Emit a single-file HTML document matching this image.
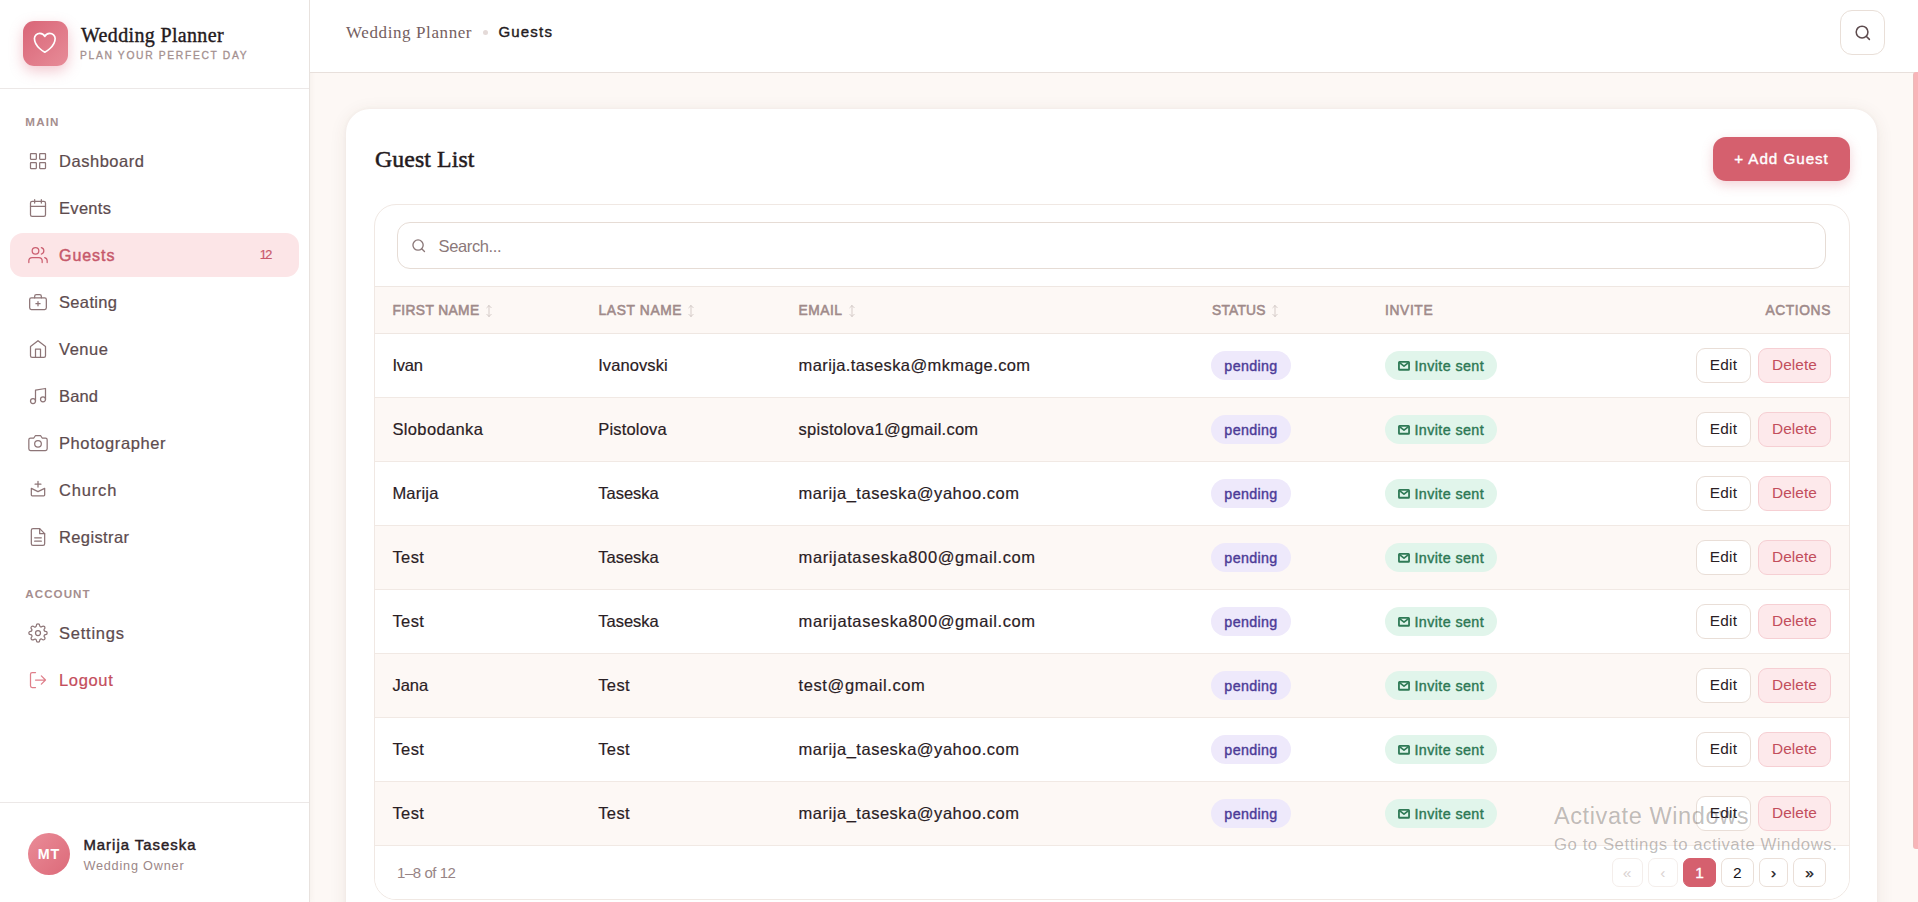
<!DOCTYPE html>
<html lang="en">
<head>
<meta charset="utf-8">
<title>Wedding Planner - Guests</title>
<style>
*{box-sizing:border-box;margin:0;padding:0}
html,body{width:1918px;height:902px;overflow:hidden}
body{font-family:"Liberation Sans",sans-serif;background:#fdf8f5;color:#2a2024;position:relative}
span{white-space:nowrap}
/* sidebar */
#sidebar{position:absolute;left:0;top:0;width:310px;height:902px;background:#fff;border-right:1px solid #e8e2de;box-shadow:1px 0 6px rgba(100,70,55,.05)}
#brand{position:absolute;left:0;top:0;width:309px;height:89px;border-bottom:1px solid #ece8e7}
#logo{position:absolute;left:23px;top:21px;width:45px;height:45px;border-radius:11px;background:linear-gradient(135deg,#d96577 0%,#e78c98 100%);box-shadow:0 5px 14px rgba(222,110,128,.38)}
#logo svg{position:absolute;left:8.100px;top:7.800px}
#brand .t1{position:absolute;left:81px;top:23px;color:#241a1d;-webkit-text-stroke:.38px #241a1d;line-height:24px}
#brand .t2{position:absolute;left:80px;top:49px;color:#a4908f;line-height:14px;-webkit-text-stroke:.3px}
.sec{position:absolute;left:25.300px;font:bold 11.6px/14px "Liberation Sans",sans-serif;color:#a58e8e;white-space:nowrap}
.nav{position:absolute;left:10px;width:289px;height:44px;border-radius:13px}
.nav svg{position:absolute;left:18px;top:12px;width:20px;height:20px;stroke:#8d7577;fill:none;stroke-width:1.5;stroke-linecap:round;stroke-linejoin:round}
.nav span.l{position:absolute;left:49px;top:11px;font:16.5px/22px "Liberation Sans",sans-serif;color:#5d4b4e;-webkit-text-stroke:.22px}
.nav.active{background:#fce5e7}
.nav.active span.l{color:#c6586b;-webkit-text-stroke:.45px;font-size:16px;top:11.700px}
.nav.active svg{stroke:#cb5f70}
.nav.logout span.l{color:#c44d5c}
.nav.logout svg{stroke:#df7f8a}
.nav .badge{position:absolute;left:249.800px;top:14.700px;letter-spacing:-1.700px;-webkit-text-stroke:.2px;font:12.7px/14px "Liberation Sans",sans-serif;color:#c9586b}
#user{position:absolute;left:0;top:802px;width:309px;height:100px;border-top:1px solid #ece8e7}
#avatar{position:absolute;left:28px;top:30px;width:42px;height:42px;border-radius:50%;background:linear-gradient(135deg,#ea8c98,#dc6a79);color:#fff;line-height:41px;text-align:center}
#user .n{position:absolute;left:83.400px;top:32.400px;line-height:20px;color:#2a2024}
#user .r{position:absolute;left:83.400px;top:54.200px;line-height:18px;color:#9c8788}
/* top bar */
#topbar{position:absolute;left:310px;top:0;width:1608px;height:73px;background:#fff;border-bottom:1px solid #e8e0dc}
#topbar .b1{position:absolute;left:36px;top:21px;line-height:24px;color:#75605f}
#topbar .dot{position:absolute;left:173px;top:30px;width:5px;height:5px;border-radius:50%;background:#e4dad8}
#topbar .b2{position:absolute;left:188.400px;top:20.300px;line-height:24px;color:#241b22}
#sbtn{position:absolute;left:1530px;top:10px;width:45px;height:45px;border:1px solid #e9dfd8;border-radius:12px;background:#fff}
#sbtn svg{position:absolute;left:12.700px;top:12.500px}
/* card */
#card{position:absolute;left:346px;top:109px;width:1531px;height:900px;background:#fff;border-radius:24px;box-shadow:0 3px 18px rgba(80,55,40,.085),0 0 4px rgba(80,55,40,.045)}
#card h1{position:absolute;left:29px;top:35px;font-weight:normal;line-height:30px;color:#241a1d;-webkit-text-stroke:.5px #241a1d;white-space:nowrap}
#addbtn{position:absolute;left:1367px;top:28px;width:137px;height:44px;border-radius:13px;background:#d5606e;color:#fff;line-height:44px;text-align:center;box-shadow:0 4px 12px rgba(213,96,110,.28);white-space:nowrap}
#tbl{position:absolute;left:28px;top:95px;width:1476px;height:696px;border:1px solid #f0e8e3;border-radius:22px;overflow:hidden;background:#fff}
#search{position:absolute;left:22px;top:17px;width:1429px;height:47px;border:1px solid #e6dcd5;border-radius:13px;background:#fff}
#search svg{position:absolute;left:12.600px;top:15px}
#search span{position:absolute;left:40.600px;top:12px;line-height:22px;color:#8b7879}
#thead{position:absolute;left:0;top:81px;width:1474px;height:48px;background:#fdf8f5;border-top:1px solid #efe7e2;border-bottom:1px solid #efe7e2}
.th{position:absolute;top:16.200px;font:13.8px/16px "Liberation Sans",sans-serif;color:#a08a8a;-webkit-text-stroke:.55px}
.sort{position:absolute;top:17.200px;fill:none;stroke:#cfc4c2;stroke-width:.85;stroke-linecap:round;stroke-linejoin:round}
.tr{position:absolute;left:0;width:1474px;height:64px;border-bottom:1px solid #f1e9e4;background:#fff}
.tr.alt{background:#fdf8f5}
.td{position:absolute;top:20px;font:16.5px/22px "Liberation Sans",sans-serif;color:#2a2024;-webkit-text-stroke:.18px}
.pill{position:absolute;top:17px;height:29px;border-radius:15px;font:14.3px/30px "Liberation Sans",sans-serif;text-align:center;-webkit-text-stroke:.4px}
.pend{left:836px;width:80px;background:#eee9fb;color:#4c3b97}
.inv{left:1010px;width:112px;background:#e1f5eb;color:#2d7854;text-align:left}
.inv svg{position:absolute;left:12.800px;top:9.600px}
.inv span{position:absolute;left:29.500px;top:0}
.btn{position:absolute;top:14px;height:35px;border-radius:9px;font:15.4px/31px "Liberation Sans",sans-serif;text-align:center;border:1px solid #e9ded7;background:#fff;color:#2a2024}
.edit{left:1321px;width:55px}
.del{left:1383px;width:73px;background:#fde9eb;border-color:#f6cfd3;color:#c24e5c}
#tfoot{position:absolute;left:0;top:641px;width:1474px;height:53px;background:#fff}
#tfoot .cnt{position:absolute;left:22px;top:17px;line-height:20px;color:#978485}
.pg{position:absolute;top:12px;height:29px;border:1px solid #eadfd8;border-radius:7px;background:#fff;font:15.5px/27px "Liberation Sans",sans-serif;text-align:center;color:#17151a}
.pg.dis{border-color:#f4eeeb;color:#d9d2d1}
.pg.cur{background:#d5606e;border-color:#d5606e;color:#fff;-webkit-text-stroke:.35px #fff}
.pg.nx{-webkit-text-stroke:.3px #17151a}
/* overlays */
#scroll{position:absolute;left:1913px;top:72px;width:6px;height:777px;border-radius:3px 0 0 3px;background:linear-gradient(to right,#ebbab9 0,#ebbab9 1.300px,#f8b4b8 1.300px)}
#wm1,#wm2{position:absolute;left:1554px;color:rgba(40,36,34,.30);white-space:nowrap}
#wm1{top:800.800px;line-height:30px}
#wm2{top:834px;line-height:22px}
</style>
</head>
<body>
<div id="sidebar">
  <div id="brand">
    <div id="logo"><svg width="27.600" height="27.600" viewBox="0 0 24 24" fill="none" stroke="#fff" stroke-width="1.45" stroke-linejoin="round"><path d="M21 8.250c0-2.485-2.099-4.500-4.688-4.500-1.935 0-3.597 1.126-4.312 2.733-.715-1.607-2.377-2.733-4.313-2.733C5.100 3.750 3 5.765 3 8.250c0 7.220 9 12 9 12s9-4.780 9-12z"/></svg></div>
    <span class="t1" style="font-size:20px;font-family:'Liberation Serif',serif;letter-spacing:0.34px">Wedding Planner</span>
    <span class="t2" style="font-size:10.3px;font-family:'Liberation Sans',sans-serif;letter-spacing:1.66px">PLAN YOUR PERFECT DAY</span>
  </div>
  <div class="sec" style="top:115px;letter-spacing:1.19px">MAIN</div>
  <div class="nav" style="top:139px"><svg viewBox="0 0 24 24"><rect x="3" y="3" width="7" height="7" rx=".6"/><rect x="14" y="3" width="7" height="7" rx=".6"/><rect x="14" y="14" width="7" height="7" rx=".6"/><rect x="3" y="14" width="7" height="7" rx=".6"/></svg><span class="l" style="letter-spacing:0.53px">Dashboard</span></div>
  <div class="nav" style="top:186px"><svg viewBox="0 0 24 24"><rect x="3" y="4" width="18" height="18" rx="2"/><path d="M16 2v4M8 2v4M3 10h18"/></svg><span class="l" style="letter-spacing:0.31px">Events</span></div>
  <div class="nav active" style="top:233px"><svg viewBox="0 0 24 24"><path d="M17 21v-2a4 4 0 0 0-4-4H5a4 4 0 0 0-4 4v2"/><circle cx="9" cy="7" r="4"/><path d="M23 21v-2a4 4 0 0 0-3-3.870M16 3.130a4 4 0 0 1 0 7.750"/></svg><span class="l" style="letter-spacing:0.96px">Guests</span><span class="badge">12</span></div>
  <div class="nav" style="top:280px"><svg viewBox="0 0 24 24"><rect x="2" y="7" width="20" height="14" rx="2"/><path d="M8 7V5a2 2 0 0 1 2-2h4a2 2 0 0 1 2 2v2M12 11.500v5M9.500 14h5"/></svg><span class="l" style="letter-spacing:0.34px">Seating</span></div>
  <div class="nav" style="top:327px"><svg viewBox="0 0 24 24"><path d="M3 9l9-7 9 7v11a2 2 0 0 1-2 2H5a2 2 0 0 1-2-2z"/><path d="M9 22V12h6v10"/></svg><span class="l" style="letter-spacing:0.55px">Venue</span></div>
  <div class="nav" style="top:374px"><svg viewBox="0 0 24 24"><path d="M9 18V5l12-2v13"/><circle cx="6" cy="18" r="3"/><circle cx="18" cy="16" r="3"/></svg><span class="l" style="letter-spacing:0.15px">Band</span></div>
  <div class="nav" style="top:421px"><svg viewBox="0 0 24 24"><path d="M23 19a2 2 0 0 1-2 2H3a2 2 0 0 1-2-2V8a2 2 0 0 1 2-2h4l2-3h6l2 3h4a2 2 0 0 1 2 2z"/><circle cx="12" cy="13" r="4"/></svg><span class="l" style="letter-spacing:0.59px">Photographer</span></div>
  <div class="nav" style="top:468px"><svg viewBox="0 0 24 24"><path d="M4 10l8 4 8-4v8a1 1 0 0 1-1 1H5a1 1 0 0 1-1-1z"/><path d="M12 1.500v7M8.500 5h7"/></svg><span class="l" style="letter-spacing:0.84px">Church</span></div>
  <div class="nav" style="top:515px"><svg viewBox="0 0 24 24"><path d="M14 2H6a2 2 0 0 0-2 2v16a2 2 0 0 0 2 2h12a2 2 0 0 0 2-2V8z"/><path d="M14 2v6h6M16 13H8M16 17H8"/></svg><span class="l" style="letter-spacing:0.38px">Registrar</span></div>
  <div class="sec" style="top:587px;letter-spacing:1.06px">ACCOUNT</div>
  <div class="nav" style="top:611px"><svg viewBox="0 0 24 24"><circle cx="12" cy="12" r="3"/><path d="M19.400 15a1.650 1.650 0 0 0 .330 1.820l.060.060a2 2 0 0 1 0 2.830 2 2 0 0 1-2.830 0l-.060-.060a1.650 1.650 0 0 0-1.820-.330 1.650 1.650 0 0 0-1 1.510V21a2 2 0 0 1-2 2 2 2 0 0 1-2-2v-.090A1.650 1.650 0 0 0 9 19.400a1.650 1.650 0 0 0-1.820.330l-.060.060a2 2 0 0 1-2.830 0 2 2 0 0 1 0-2.830l.060-.060a1.650 1.650 0 0 0 .330-1.820 1.650 1.650 0 0 0-1.510-1H3a2 2 0 0 1-2-2 2 2 0 0 1 2-2h.090A1.650 1.650 0 0 0 4.600 9a1.650 1.650 0 0 0-.330-1.820l-.060-.060a2 2 0 0 1 0-2.830 2 2 0 0 1 2.830 0l.060.060a1.650 1.650 0 0 0 1.820.330H9a1.650 1.650 0 0 0 1-1.510V3a2 2 0 0 1 2-2 2 2 0 0 1 2 2v.090a1.650 1.650 0 0 0 1 1.510 1.650 1.650 0 0 0 1.820-.330l.060-.060a2 2 0 0 1 2.830 0 2 2 0 0 1 0 2.830l-.060.060a1.650 1.650 0 0 0-.330 1.820V9a1.650 1.650 0 0 0 1.510 1H21a2 2 0 0 1 2 2 2 2 0 0 1-2 2h-.090a1.650 1.650 0 0 0-1.510 1z"/></svg><span class="l" style="letter-spacing:0.77px">Settings</span></div>
  <div class="nav logout" style="top:658px"><svg viewBox="0 0 24 24"><path d="M9 21H5a2 2 0 0 1-2-2V5a2 2 0 0 1 2-2h4"/><path d="M16 17l5-5-5-5M21 12H9"/></svg><span class="l" style="letter-spacing:0.65px">Logout</span></div>
  <div id="user">
    <div id="avatar"><span style="font-weight:bold;font-size:14.3px;font-family:'Liberation Sans',sans-serif;letter-spacing:0.84px">MT</span></div>
    <span class="n" style="-webkit-text-stroke:.45px;font-size:14.9px;font-family:'Liberation Sans',sans-serif;letter-spacing:1.01px">Marija Taseska</span>
    <span class="r" style="font-size:12.7px;font-family:'Liberation Sans',sans-serif;letter-spacing:0.79px">Wedding Owner</span>
  </div>
</div>
<div id="topbar">
  <span class="b1" style="font-size:17px;font-family:'Liberation Serif',serif;letter-spacing:0.6px">Wedding Planner</span><div class="dot"></div><span class="b2" style="-webkit-text-stroke:.4px;font-size:15px;font-family:'Liberation Sans',sans-serif;letter-spacing:1.21px">Guests</span>
  <div id="sbtn"><svg width="17.600" height="17.600" viewBox="0 0 24 24" fill="none" stroke="#5d4b4e" stroke-width="2.100" stroke-linecap="round"><circle cx="11" cy="11" r="8"/><path d="M16.650 16.650L21 21"/></svg></div>
</div>
<div id="card">
  <h1 style="font-size:23.8px;font-family:'Liberation Serif',serif;letter-spacing:0.1px">Guest List</h1>
  <div id="addbtn"><span style="-webkit-text-stroke:.4px;font-size:15.2px;font-family:'Liberation Sans',sans-serif;letter-spacing:0.96px">+ Add Guest</span></div>
  <div id="tbl">
    <div id="search"><svg width="15.400" height="15.400" viewBox="0 0 24 24" fill="none" stroke="#8b7879" stroke-width="2.100" stroke-linecap="round"><circle cx="11" cy="11" r="8"/><path d="M16.650 16.650L21 21"/></svg><span style="font-size:16.5px;font-family:'Liberation Sans',sans-serif;letter-spacing:-0.38px">Search...</span></div>
    <div id="thead">
      <span class="th" style="left:17.5px;letter-spacing:0.37px">FIRST NAME</span><svg class="sort" style="left:109.9px" width="8" height="14" viewBox="0 0 8 14"><path d="M4 1.500v11M1.800 3.700L4 1.500l2.200 2.200M1.800 10.300L4 12.500l2.200-2.200"/></svg>
      <span class="th" style="left:223.5px;letter-spacing:0.64px">LAST NAME</span><svg class="sort" style="left:312.4px" width="8" height="14" viewBox="0 0 8 14"><path d="M4 1.500v11M1.800 3.700L4 1.500l2.200 2.200M1.800 10.300L4 12.500l2.200-2.200"/></svg>
      <span class="th" style="left:423.4px;letter-spacing:0.55px">EMAIL</span><svg class="sort" style="left:472.8px" width="8" height="14" viewBox="0 0 8 14"><path d="M4 1.500v11M1.800 3.700L4 1.500l2.200 2.200M1.800 10.300L4 12.500l2.200-2.200"/></svg>
      <span class="th" style="left:837.0px;letter-spacing:0.2px">STATUS</span><svg class="sort" style="left:896.2px" width="8" height="14" viewBox="0 0 8 14"><path d="M4 1.500v11M1.800 3.700L4 1.500l2.200 2.200M1.800 10.300L4 12.500l2.200-2.200"/></svg>
      <span class="th" style="left:1010.1px;letter-spacing:0.61px">INVITE</span>
      <span class="th" style="left:1390.4px;letter-spacing:0.61px">ACTIONS</span>
    </div>
      <div class="tr" style="top:129px">
        <span class="td" style="left:17.4px;letter-spacing:-0.23px">Ivan</span>
        <span class="td" style="left:223.2px;letter-spacing:0.09px">Ivanovski</span>
        <span class="td" style="left:423.6px;letter-spacing:0.39px">marija.taseska@mkmage.com</span>
        <span class="pill pend"><span style="letter-spacing:0.35px">pending</span></span>
        <span class="pill inv"><svg width="12" height="10" viewBox="0 0 12 10" fill="none" stroke="#2f7a56" stroke-width="1.800" stroke-linejoin="round"><rect x=".95" y=".95" width="10.100" height="7.800" rx=".6"/><path d="M1.200 1.400L6 5.100l4.800-3.700"/></svg><span style="letter-spacing:0.4px">Invite sent</span></span>
        <span class="btn edit"><span style="letter-spacing:0.29px">Edit</span></span>
        <span class="btn del"><span style="letter-spacing:0.06px">Delete</span></span>
      </div>
      <div class="tr alt" style="top:193px">
        <span class="td" style="left:17.4px;letter-spacing:0.37px">Slobodanka</span>
        <span class="td" style="left:223.2px;letter-spacing:0.19px">Pistolova</span>
        <span class="td" style="left:423.6px;letter-spacing:0.25px">spistolova1@gmail.com</span>
        <span class="pill pend"><span style="letter-spacing:0.35px">pending</span></span>
        <span class="pill inv"><svg width="12" height="10" viewBox="0 0 12 10" fill="none" stroke="#2f7a56" stroke-width="1.800" stroke-linejoin="round"><rect x=".95" y=".95" width="10.100" height="7.800" rx=".6"/><path d="M1.200 1.400L6 5.100l4.800-3.700"/></svg><span style="letter-spacing:0.4px">Invite sent</span></span>
        <span class="btn edit"><span style="letter-spacing:0.29px">Edit</span></span>
        <span class="btn del"><span style="letter-spacing:0.06px">Delete</span></span>
      </div>
      <div class="tr" style="top:257px">
        <span class="td" style="left:17.4px;letter-spacing:0.21px">Marija</span>
        <span class="td" style="left:223.2px;letter-spacing:0.01px">Taseska</span>
        <span class="td" style="left:423.6px;letter-spacing:0.52px">marija_taseska@yahoo.com</span>
        <span class="pill pend"><span style="letter-spacing:0.35px">pending</span></span>
        <span class="pill inv"><svg width="12" height="10" viewBox="0 0 12 10" fill="none" stroke="#2f7a56" stroke-width="1.800" stroke-linejoin="round"><rect x=".95" y=".95" width="10.100" height="7.800" rx=".6"/><path d="M1.200 1.400L6 5.100l4.800-3.700"/></svg><span style="letter-spacing:0.4px">Invite sent</span></span>
        <span class="btn edit"><span style="letter-spacing:0.29px">Edit</span></span>
        <span class="btn del"><span style="letter-spacing:0.06px">Delete</span></span>
      </div>
      <div class="tr alt" style="top:321px">
        <span class="td" style="left:17.4px;letter-spacing:0.41px">Test</span>
        <span class="td" style="left:223.2px;letter-spacing:0.01px">Taseska</span>
        <span class="td" style="left:423.6px;letter-spacing:0.61px">marijataseska800@gmail.com</span>
        <span class="pill pend"><span style="letter-spacing:0.35px">pending</span></span>
        <span class="pill inv"><svg width="12" height="10" viewBox="0 0 12 10" fill="none" stroke="#2f7a56" stroke-width="1.800" stroke-linejoin="round"><rect x=".95" y=".95" width="10.100" height="7.800" rx=".6"/><path d="M1.200 1.400L6 5.100l4.800-3.700"/></svg><span style="letter-spacing:0.4px">Invite sent</span></span>
        <span class="btn edit"><span style="letter-spacing:0.29px">Edit</span></span>
        <span class="btn del"><span style="letter-spacing:0.06px">Delete</span></span>
      </div>
      <div class="tr" style="top:385px">
        <span class="td" style="left:17.4px;letter-spacing:0.41px">Test</span>
        <span class="td" style="left:223.2px;letter-spacing:0.01px">Taseska</span>
        <span class="td" style="left:423.6px;letter-spacing:0.61px">marijataseska800@gmail.com</span>
        <span class="pill pend"><span style="letter-spacing:0.35px">pending</span></span>
        <span class="pill inv"><svg width="12" height="10" viewBox="0 0 12 10" fill="none" stroke="#2f7a56" stroke-width="1.800" stroke-linejoin="round"><rect x=".95" y=".95" width="10.100" height="7.800" rx=".6"/><path d="M1.200 1.400L6 5.100l4.800-3.700"/></svg><span style="letter-spacing:0.4px">Invite sent</span></span>
        <span class="btn edit"><span style="letter-spacing:0.29px">Edit</span></span>
        <span class="btn del"><span style="letter-spacing:0.06px">Delete</span></span>
      </div>
      <div class="tr alt" style="top:449px">
        <span class="td" style="left:17.4px;letter-spacing:0.01px">Jana</span>
        <span class="td" style="left:223.2px;letter-spacing:0.41px">Test</span>
        <span class="td" style="left:423.6px;letter-spacing:0.59px">test@gmail.com</span>
        <span class="pill pend"><span style="letter-spacing:0.35px">pending</span></span>
        <span class="pill inv"><svg width="12" height="10" viewBox="0 0 12 10" fill="none" stroke="#2f7a56" stroke-width="1.800" stroke-linejoin="round"><rect x=".95" y=".95" width="10.100" height="7.800" rx=".6"/><path d="M1.200 1.400L6 5.100l4.800-3.700"/></svg><span style="letter-spacing:0.4px">Invite sent</span></span>
        <span class="btn edit"><span style="letter-spacing:0.29px">Edit</span></span>
        <span class="btn del"><span style="letter-spacing:0.06px">Delete</span></span>
      </div>
      <div class="tr" style="top:513px">
        <span class="td" style="left:17.4px;letter-spacing:0.41px">Test</span>
        <span class="td" style="left:223.2px;letter-spacing:0.41px">Test</span>
        <span class="td" style="left:423.6px;letter-spacing:0.52px">marija_taseska@yahoo.com</span>
        <span class="pill pend"><span style="letter-spacing:0.35px">pending</span></span>
        <span class="pill inv"><svg width="12" height="10" viewBox="0 0 12 10" fill="none" stroke="#2f7a56" stroke-width="1.800" stroke-linejoin="round"><rect x=".95" y=".95" width="10.100" height="7.800" rx=".6"/><path d="M1.200 1.400L6 5.100l4.800-3.700"/></svg><span style="letter-spacing:0.4px">Invite sent</span></span>
        <span class="btn edit"><span style="letter-spacing:0.29px">Edit</span></span>
        <span class="btn del"><span style="letter-spacing:0.06px">Delete</span></span>
      </div>
      <div class="tr alt" style="top:577px">
        <span class="td" style="left:17.4px;letter-spacing:0.41px">Test</span>
        <span class="td" style="left:223.2px;letter-spacing:0.41px">Test</span>
        <span class="td" style="left:423.6px;letter-spacing:0.52px">marija_taseska@yahoo.com</span>
        <span class="pill pend"><span style="letter-spacing:0.35px">pending</span></span>
        <span class="pill inv"><svg width="12" height="10" viewBox="0 0 12 10" fill="none" stroke="#2f7a56" stroke-width="1.800" stroke-linejoin="round"><rect x=".95" y=".95" width="10.100" height="7.800" rx=".6"/><path d="M1.200 1.400L6 5.100l4.800-3.700"/></svg><span style="letter-spacing:0.4px">Invite sent</span></span>
        <span class="btn edit"><span style="letter-spacing:0.29px">Edit</span></span>
        <span class="btn del"><span style="letter-spacing:0.06px">Delete</span></span>
      </div>
    <div id="tfoot">
      <span class="cnt" style="font-size:15px;font-family:'Liberation Sans',sans-serif;letter-spacing:-0.45px">1–8 of 12</span>
      <span class="pg dis" style="left:1236.500px;width:31px">«</span>
      <span class="pg dis" style="left:1273px;width:29.500px">‹</span>
      <span class="pg cur" style="left:1308px;width:33px">1</span>
      <span class="pg" style="left:1346px;width:32.500px">2</span>
      <span class="pg nx" style="left:1384px;width:29px">›</span>
      <span class="pg nx" style="left:1418px;width:33px">»</span>
    </div>
  </div>
</div>
<div id="scroll"></div>
<span id="wm1" style="font-size:23.5px;font-family:'Liberation Sans',sans-serif;letter-spacing:0.6px">Activate Windows</span>
<span id="wm2" style="font-size:16.8px;font-family:'Liberation Sans',sans-serif;letter-spacing:0.53px">Go to Settings to activate Windows.</span>
</body>
</html>
